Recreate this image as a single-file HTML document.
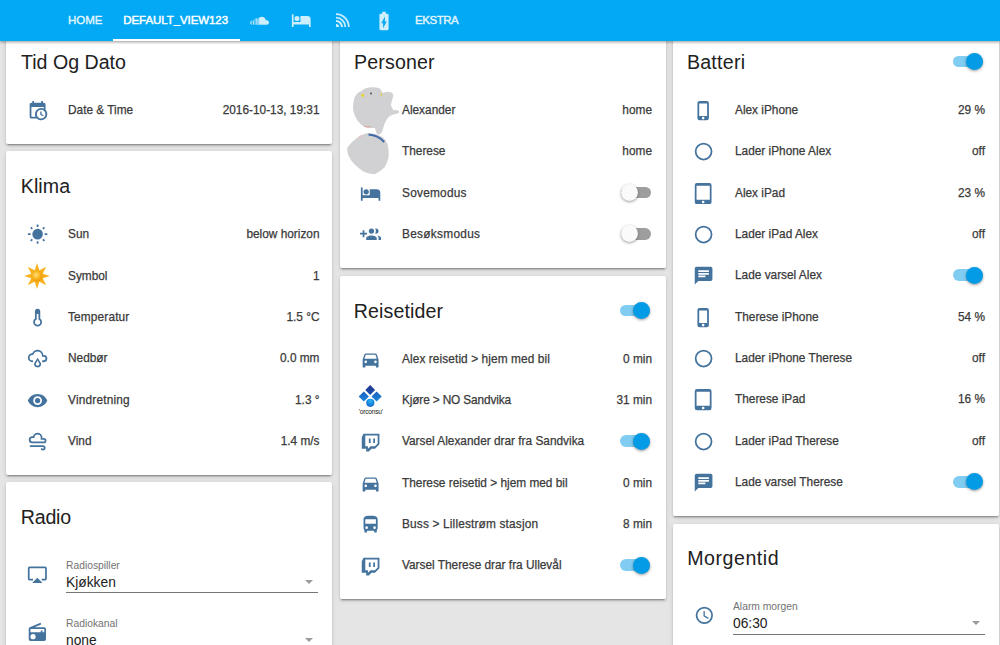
<!DOCTYPE html>
<html><head><meta charset="utf-8"><style>
*{box-sizing:border-box;margin:0;padding:0}
html,body{width:1000px;height:645px;overflow:hidden;background:#e5e5e5;font-family:"Liberation Sans",sans-serif;color:#212121}
#hdr{position:absolute;left:0;top:0;width:1000px;height:41px;background:#03a9f4;z-index:5;box-shadow:0 1px 3px rgba(0,0,0,0.42)}
.tab{position:absolute;top:0;height:41px;line-height:41px;font-size:11.5px;font-weight:normal;-webkit-text-stroke:0.45px currentColor;color:rgba(255,255,255,0.8);white-space:nowrap}
.tab.sel{color:#fff}
.uline{position:absolute;left:113px;top:39px;width:127px;height:2px;background:#fff}
.hicon{position:absolute;fill:rgba(255,255,255,0.8)}
.card{position:absolute;background:#fff;border-radius:2px;box-shadow:0 2px 2px 0 rgba(0,0,0,.14),0 1px 5px 0 rgba(0,0,0,.12),0 3px 1px -2px rgba(0,0,0,.2)}
.c1{left:6px;width:326px}
.c2{left:340px;width:326px}
.c3{left:673px;width:326px}
.title{position:absolute;left:15px;height:40px;line-height:40px;font-size:19.6px;white-space:nowrap;color:#212121}
.row{position:absolute;left:0;width:100%;height:40px;line-height:40px;font-size:11.85px;white-space:nowrap;color:#3a3a3a;-webkit-text-stroke:0.25px #3a3a3a}
.row .nm{position:absolute;left:62px;top:0}
.row .val{position:absolute;right:14px;top:0}
.row svg.ic{position:absolute;left:20.05px;top:10.1px;width:21.2px;height:21.2px;fill:#44739e}
.row svg.img{position:absolute}
.tg{position:absolute;right:15px;top:14px;width:30px;height:12px}
.tg .tr{position:absolute;left:0;top:0;width:30px;height:11.6px;border-radius:6px;background:#9e9e9e}
.tg .kn{position:absolute;top:-2.7px;left:-0.7px;width:17px;height:17px;border-radius:50%;background:#fafafa;box-shadow:0 1px 3px rgba(0,0,0,0.4)}
.tg.on .tr{background:rgba(3,155,229,0.5)}
.tg.on .kn{left:13.7px;background:#039be5}
.inp{position:absolute;left:60px;right:14px}
.inp .lbl{position:absolute;left:0;font-size:10.3px;color:#737373;white-space:nowrap}
.inp .v{position:absolute;left:0;font-size:13.8px;color:#212121;white-space:nowrap}
.inp .ul{position:absolute;left:0;right:0;height:1px;background:#757575}
.inp .arr{position:absolute;right:5px;width:0;height:0;border-left:4.3px solid transparent;border-right:4.3px solid transparent;border-top:4.6px solid #9b9b9b}
.c1 .row .val{right:12.5px}
.tg.on{right:15.7px}
.tg .kn{left:-0.2px}
.tg.on .kn{left:13px}
.c1 .row svg.ic{left:20.7px}
</style></head><body>
<div id="hdr">
  <div class="tab" style="left:68px">HOME</div>
  <div class="tab sel" style="left:123.3px;letter-spacing:-0.08px">DEFAULT_VIEW123</div>
  <div class="uline"></div>
  <svg class="hicon" style="left:249px;top:9.5px;width:20.9px;height:20.9px" viewBox="0 0 24 24"><path d="M11.56,8.87V17H20.32V17C22.17,16.87 23,15.73 23,14.33C23,12.85 21.88,11.66 20.38,11.66C20,11.66 19.68,11.74 19.35,11.88C19.11,9.54 17.12,7.71 14.67,7.71C13.5,7.71 12.39,8.15 11.56,8.87M10.68,9.89C10.38,9.71 10.06,9.57 9.71,9.5V17H11.1V9.34C10.95,9.5 10.81,9.7 10.68,9.89M8.33,9.35V17H9.25V9.38C9.06,9.35 8.87,9.34 8.67,9.34C8.55,9.34 8.44,9.34 8.33,9.35M6.5,10V17H7.41V9.54C7.08,9.65 6.770,9.81 6.5,10M4.83,12.5C4.77,12.5 4.71,12.44 4.64,12.41V17H5.56V10.86C5.19,11.34 4.94,11.91 4.83,12.5M2.79,12.22V16.91C3,16.97 3.24,17 3.5,17H3.72V12.14C3.64,12.13 3.56,12.12 3.5,12.12C3.24,12.12 3,12.16 2.79,12.22M1,14.56C1,15.31 1.34,15.97 1.87,16.42V12.71C1.34,13.15 1,13.82 1,14.56Z"/></svg>
  <svg class="hicon" style="left:290.85px;top:9.83px;width:20.5px;height:20.5px" viewBox="0 0 24 24"><path d="M7,13A3,3 0 0,0 10,10A3,3 0 0,0 7,7A3,3 0 0,0 4,10A3,3 0 0,0 7,13M19,7H11V14H3V5H1V20H3V17H21V20H23V11A4,4 0 0,0 19,7Z"/></svg>
  <svg class="hicon" style="left:335.6px;top:13.1px;width:14px;height:14px" viewBox="0 0 14 14"><path d="M0,14V10.9A3.1,3.1 0 0,1 3.1,14ZM0,7.00A7.00,7.00 0 0,1 7.00,14H4.90A4.90,4.90 0 0,0 0,9.10ZM0,3.85A10.15,10.15 0 0,1 10.15,14H8.40A8.40,8.40 0 0,0 0,5.60ZM0,0.35A13.65,13.65 0 0,1 13.65,14H11.90A11.90,11.90 0 0,0 0,2.10Z"/></svg>
  <svg class="hicon" style="left:373px;top:9.7px;width:22px;height:22px" viewBox="0 0 24 24"><path d="M15.67,4H14V2H10V4H8.33C7.6,4 7,4.6 7,5.33V20.67C7,21.4 7.6,22 8.33,22H15.67C16.4,22 17,21.4 17,20.67V5.33C17,4.6 16.4,4 15.67,4M11,20V14.5H9L13,7V12.5H15L11,20Z"/></svg>
  <div class="tab" style="left:415px;letter-spacing:-0.45px">EKSTRA</div>
</div>
<div class="card c1" style="top:26.70px;height:117.00px"><div class="title" style="top:15.20px;left:15.00px;letter-spacing:0.00px">Tid Og Dato</div><div class="row" style="top:63.30px"><svg class="ic" viewBox="0 0 24 24"><path d="M15,13H16.5V15.82L18.94,17.23L18.19,18.53L15,16.69V13M19,8H5V19H9.67C9.24,18.09 9,17.07 9,16A7,7 0 0,1 16,9C17.07,9 18.09,9.24 19,9.67V8M5,21C3.89,21 3,20.1 3,19V5C3,3.89 3.89,3 5,3H6V1H8V3H16V1H18V3H19A2,2 0 0,1 21,5V11.1C22.24,12.36 23,14.09 23,16A7,7 0 0,1 16,23C14.09,23 12.36,22.24 11.1,21H5M16,11.15A4.85,4.85 0 0,0 11.15,16C11.15,18.68 13.32,20.85 16,20.85A4.85,4.85 0 0,0 20.85,16C20.85,13.32 18.68,11.15 16,11.15Z"/></svg><span class="nm">Date &amp; Time</span><span class="val">2016-10-13, 19:31</span></div></div>
<div class="card c1" style="top:151.00px;height:323.65px"><div class="title" style="top:15.20px;left:14.70px;letter-spacing:0.12px">Klima</div><div class="row" style="top:63.30px"><svg class="ic" viewBox="0 0 24 24"><path d="M3.55,18.54L4.96,19.95L6.76,18.16L5.34,16.74M11,22.45C11.32,22.45 13,22.45 13,22.45V19.5H11M12,5.5A6,6 0 0,0 6,11.5A6,6 0 0,0 12,17.5A6,6 0 0,0 18,11.5C18,8.18 15.31,5.5 12,5.5M20,12.5H23V10.5H20M17.24,18.16L19.04,19.95L20.45,18.54L18.66,16.74M20.45,4.46L19.04,3.05L17.24,4.84L18.66,6.26M13,0.55H11V3.5H13M4,10.5H1V12.5H4M6.76,4.84L4.96,3.05L3.55,4.46L5.34,6.26L6.76,4.84Z"/></svg><span class="nm">Sun</span><span class="val">below horizon</span></div><div class="row" style="top:104.63px"><svg class="img" style="left:18.3px;top:7.1px;width:26px;height:26px" viewBox="0 0 26 26">
<defs><radialGradient id="sg" cx="0.42" cy="0.4" r="0.6"><stop offset="0" stop-color="#ffe07a"/><stop offset="0.6" stop-color="#f9b21d"/><stop offset="1" stop-color="#ef9a0e"/></radialGradient></defs>
<polygon fill="#f6b21f" points="13.00,0.00 15.37,7.27 22.19,3.81 18.73,10.63 26.00,13.00 18.73,15.37 22.19,22.19 15.37,18.73 13.00,26.00 10.63,18.73 3.81,22.19 7.27,15.37 0.00,13.00 7.27,10.63 3.81,3.81 10.63,7.27"/>
<circle cx="13" cy="13" r="5.6" fill="url(#sg)"/></svg><span class="nm">Symbol</span><span class="val">1</span></div><div class="row" style="top:145.96px"><svg class="ic" viewBox="0 0 24 24"><path d="M17,17A5,5 0 0,1 12,22A5,5 0 0,1 7,17C7,15.36 7.79,13.91 9,13V5A3,3 0 0,1 12,2A3,3 0 0,1 15,5V13C16.21,13.91 17,15.36 17,17M11,8V14.17C9.840,14.58 9,15.69 9,17A3,3 0 0,0 12,20A3,3 0 0,0 15,17C15,15.69 14.16,14.58 13,14.17V8H11Z"/></svg><span class="nm" style="letter-spacing:0.15px">Temperatur</span><span class="val">1.5 °C</span></div><div class="row" style="top:187.29px"><svg class="ic" viewBox="0 0 24 24"><path d="M6,14A1,1 0 0,1 7,15A1,1 0 0,1 6,16A5,5 0 0,1 1,11A5,5 0 0,1 6,6C7,3.65 9.3,2 12,2C15.43,2 18.24,4.66 18.5,8.03L19,8A4,4 0 0,1 23,12A4,4 0 0,1 19,16H18A1,1 0 0,1 17,15A1,1 0 0,1 18,14H19A2,2 0 0,0 21,12A2,2 0 0,0 19,10H17V9A5,5 0 0,0 12,4C9.5,4 7.45,5.82 7.06,8.19C6.73,8.07 6.37,8 6,8A3,3 0 0,0 3,11A3,3 0 0,0 6,14M14.83,15.67C16.39,17.23 16.39,19.5 14.83,21.08C14.05,21.86 13,22 12,22C11,22 9.95,21.86 9.17,21.08C7.61,19.5 7.61,17.23 9.17,15.67L12,11L14.83,15.67M13.41,16.69L12,14.25L10.59,16.69C9.8,17.5 9.8,18.7 10.59,19.5C11,19.93 11.5,20 12,20C12.5,20 13,19.93 13.41,19.5C14.2,18.7 14.2,17.5 13.41,16.69Z"/></svg><span class="nm">Nedbør</span><span class="val">0.0 mm</span></div><div class="row" style="top:228.62px"><svg class="ic" viewBox="0 0 24 24"><path d="M12,9A3,3 0 0,0 9,12A3,3 0 0,0 12,15A3,3 0 0,0 15,12A3,3 0 0,0 12,9M12,17A5,5 0 0,1 7,12A5,5 0 0,1 12,7A5,5 0 0,1 17,12A5,5 0 0,1 12,17M12,4.5C7,4.5 2.73,7.61 1,12C2.73,16.39 7,19.5 12,19.5C17,19.5 21.27,16.39 23,12C21.27,7.61 17,4.5 12,4.5Z"/></svg><span class="nm" style="letter-spacing:0.20px">Vindretning</span><span class="val">1.3 °</span></div><div class="row" style="top:269.95px"><svg class="ic" viewBox="0 0 24 24"><path d="M6,6L6.69,6.06C7.32,3.72 9.46,2 12,2A5.5,5.5 0 0,1 17.5,7.5L17.42,8.45C17.88,8.16 18.42,8 19,8A3,3 0 0,1 22,11A3,3 0 0,1 19,14H6A4,4 0 0,1 2,10A4,4 0 0,1 6,6M6,8A2,2 0 0,0 4,10A2,2 0 0,0 6,12H19A1,1 0 0,0 20,11A1,1 0 0,0 19,10H15.5V7.5A3.5,3.5 0 0,0 12,4A3.5,3.5 0 0,0 8.5,7.5V8H6M18,18H4A1,1 0 0,1 3,17A1,1 0 0,1 4,16H18A3,3 0 0,1 21,19A3,3 0 0,1 18,22C17.17,22 16.42,21.66 15.880,21.12C15.5,20.73 15.5,20.1 15.88,19.71C16.27,19.32 16.9,19.32 17.29,19.71C17.47,19.89 17.72,20 18,20A1,1 0 0,0 19,19A1,1 0 0,0 18,18Z"/></svg><span class="nm">Vind</span><span class="val">1.4 m/s</span></div></div>
<div class="card c1" style="top:482.3px;height:250px">
  <div class="title" style="top:14.7px;left:14.8px;letter-spacing:-0.21px">Radio</div>
  <svg class="img" style="position:absolute;left:20.6px;top:81.7px;width:20.7px;height:20.7px;fill:#44739e" viewBox="0 0 24 24"><path d="M6,22H18L12,16M21,3H3A2,2 0 0,0 1,5V17A2,2 0 0,0 3,19H7V17H3V5H21V17H17V19H21A2,2 0 0,0 23,17V5A2,2 0 0,0 21,3Z"/></svg>
  <div class="inp" style="top:70px;height:50px">
    <div class="lbl" style="top:7.3px">Radiospiller</div>
    <div class="v" style="top:22.8px">Kjøkken</div>
    <div class="ul" style="top:40px"></div>
    <div class="arr" style="top:27.5px"></div>
  </div>
  <svg class="img" style="position:absolute;left:20.6px;top:139.8px;width:20.7px;height:20.7px;fill:#44739e" viewBox="0 0 24 24"><path d="M20,6A2,2 0 0,1 22,8V20A2,2 0 0,1 20,22H4A2,2 0 0,1 2,20V8C2,7.15 2.53,6.42 3.28,6.130L15.71,1L16.47,2.83L8.83,6H20M20,8H4V12H16V10H18V12H20V8M7,14A3,3 0 0,0 4,17A3,3 0 0,0 7,20A3,3 0 0,0 10,17A3,3 0 0,0 7,14Z"/></svg>
  <div class="inp" style="top:128.2px;height:50px">
    <div class="lbl" style="top:7.3px">Radiokanal</div>
    <div class="v" style="top:22.8px">none</div>
    <div class="ul" style="top:40px"></div>
    <div class="arr" style="top:27.5px"></div>
  </div>
</div>
<div class="card c2" style="top:26.70px;height:240.99px"><div class="title" style="top:15.20px;left:13.95px;letter-spacing:0.17px">Personer</div><div class="row" style="top:63.30px"><span class="nm">Alexander</span><span class="val">home</span></div><div class="row" style="top:104.63px"><span class="nm">Therese</span><span class="val">home</span></div><div class="row" style="top:145.96px"><svg class="ic" style="top:10.60px" viewBox="0 0 24 24"><path d="M7,13A3,3 0 0,0 10,10A3,3 0 0,0 7,7A3,3 0 0,0 4,10A3,3 0 0,0 7,13M19,7H11V14H3V5H1V20H3V17H21V20H23V11A4,4 0 0,0 19,7Z"/></svg><span class="nm" style="letter-spacing:0.24px">Sovemodus</span><div class="tg"><div class="tr"></div><div class="kn"></div></div></div><div class="row" style="top:187.29px"><svg class="ic" viewBox="0 0 24 24"><path d="M13,13C11,13 7,14 7,16V18H19V16C19,14 15,13 13,13M19.62,13.16C20.45,13.88 21,14.82 21,16V18H24V16C24,14.46 21.63,13.5 19.62,13.16M13,11A3,3 0 0,0 16,8A3,3 0 0,0 13,5A3,3 0 0,0 10,8A3,3 0 0,0 13,11M18,11A3,3 0 0,0 21,8A3,3 0 0,0 18,5C17.68,5 17.37,5.05 17.08,5.14C17.65,5.95 18,6.94 18,8C18,9.06 17.65,10.04 17.08,10.85C17.37,10.95 17.68,11 18,11M8,10H5V7H3V10H0V12H3V15H5V12H8V10Z"/></svg><span class="nm" style="letter-spacing:0.30px">Besøksmodus</span><div class="tg"><div class="tr"></div><div class="kn"></div></div></div><svg style="position:absolute;left:0;top:53.3px;width:62px;height:100px" viewBox="0 0 62 100">
<g fill="#d1d1d3" stroke="#d1d1d3" stroke-width="2.5" stroke-linejoin="round">
<path d="M15.5,18.6 C17,15 19,13 21.7,12.4 C25,9.5 28,8.5 31,8.5 C34,8.3 37,8.6 38.8,9.3 C40.5,11 41.5,13 41.9,14.7 C44,13.5 47,12.8 49.6,13.2 C51,13.5 52,14.5 52,15.5 C51.5,19 50,22 49.6,24.8 C50.5,27.5 51.5,30 52.7,31.8 C54.5,31.2 56.5,31.2 58,31.8 C56,32.6 54,33 52.7,33.3 C51,34 49.5,34.8 48,35.7 C46,38 44.5,40.5 43.4,43.4 C42.5,46 41.8,48.5 41,51.2 C40,52.5 39,53.3 38,53.5 C37,51 36.5,48.5 35.7,46.5 C33,46.8 30.5,46.8 27.9,46.5 C25.5,45.8 23.5,44.8 21.7,43.4 C19.5,41.5 18,39.5 17,37.2 C15.5,34.5 14.8,32 14.3,29.5 C14,26 14.5,22 15.5,18.6Z"/>
<path d="M27.9,54.3 C33,54.5 38,56 41.9,58 C44,60 45.5,62.5 46.5,65 C47.5,69 47.8,73.5 47.3,77.5 C46.5,81 45.2,84 43.4,86.8 C40.5,89.5 37.5,91.5 34.1,93 C30.5,92.5 26.8,91.5 23.3,90 C20.5,88 18,86 15.5,83.7 C13,80.8 10.8,77.8 9.3,74.4 C8.6,72.3 8.3,70.2 8.5,68.2 C10,66 12,64 14,62 C16,60 18,58.5 20.2,57.4 C22.7,55.8 25.2,54.8 27.9,54.3Z"/>
</g>
<path d="M28.5,54.6 C34,55 40,57.5 44.2,62" stroke="#3f6aa8" stroke-width="2" fill="none"/>
<path d="M20.5,15.5 L24,13.5 L23.5,17.5Z" fill="#e6d21a"/>
<path d="M40,14 L42,13 L42,17Z" fill="#e0d040"/>
<circle cx="31" cy="13.5" r="0.9" fill="#444"/>
<path d="M24,46 C26,47 29,47 31,46" stroke="#e0b0a8" stroke-width="1.2" fill="none"/>
<path d="M19,57 L22,55.5" stroke="#e8b8b0" stroke-width="1.2" fill="none"/>
</svg>
</div>
<div class="card c2" style="top:275.50px;height:323.65px"><div class="title" style="top:15.20px;left:13.80px;letter-spacing:0.11px">Reisetider</div><div class="row" style="top:15.20px"><div class="tg on"><div class="tr"></div><div class="kn"></div></div></div><div class="row" style="top:63.30px"><svg class="ic" viewBox="0 0 24 24"><path d="M5,11L6.5,6.5H17.5L19,11M17.5,16A1.5,1.5 0 0,1 16,14.5A1.5,1.5 0 0,1 17.5,13A1.5,1.5 0 0,1 19,14.5A1.5,1.5 0 0,1 17.5,16M6.5,16A1.5,1.5 0 0,1 5,14.5A1.5,1.5 0 0,1 6.5,13A1.5,1.5 0 0,1 8,14.5A1.5,1.5 0 0,1 6.5,16M18.92,6C18.72,5.42 18.16,5 17.5,5H6.5C5.84,5 5.28,5.42 5.08,6L3,12V20A1,1 0 0,0 4,21H5A1,1 0 0,0 6,20V19H18V20A1,1 0 0,0 19,21H20A1,1 0 0,0 21,20V12L18.92,6Z"/></svg><span class="nm" style="letter-spacing:0.10px">Alex reisetid &gt; hjem med bil</span><span class="val">0 min</span></div><div class="row" style="top:104.63px"><svg class="img" style="left:14px;top:1.9px;width:34px;height:36px" viewBox="354 382 34 36">
<defs>
<linearGradient id="lgt" x1="0" y1="0" x2="0" y2="1"><stop offset="0" stop-color="#24358f"/><stop offset="1" stop-color="#1553b0"/></linearGradient>
<linearGradient id="lgs" x1="0" y1="0" x2="0" y2="1"><stop offset="0" stop-color="#1a5fbf"/><stop offset="1" stop-color="#1a86dc"/></linearGradient>
<radialGradient id="lgc" cx="0.5" cy="0.3" r="0.7"><stop offset="0" stop-color="#26b4f5"/><stop offset="1" stop-color="#1565c8"/></radialGradient>
</defs>
<polygon points="370.2,385.1 375.1,390 370.2,394.9 365.3,390" fill="url(#lgt)"/>
<polygon points="363.8,391.4 368.9,396.5 363.8,401.6 358.7,396.5" fill="url(#lgs)"/>
<polygon points="376.6,391.4 381.7,396.5 376.6,401.6 371.5,396.5" fill="url(#lgs)"/>
<circle cx="370.3" cy="402.8" r="4.1" fill="url(#lgc)"/>
<text x="370.8" y="413.6" font-size="6.6" text-anchor="middle" fill="#222" font-family="Liberation Sans" letter-spacing="-0.2">'orconsu'</text>
</svg>
<span class="nm" style="letter-spacing:-0.14px">Kjøre &gt; NO Sandvika</span><span class="val">31 min</span></div><div class="row" style="top:145.96px"><svg class="ic" viewBox="0 0 24 24"><path d="M4,2H22V14L17,19H13L10,22H7V19H2V6L4,2M20,13V4H6V16H9V19L12,16H17L20,13M15,7.5H17V12.6H15V7.5M10,7.5H12V12.6H10V7.5Z"/></svg><span class="nm">Varsel Alexander drar fra Sandvika</span><div class="tg on"><div class="tr"></div><div class="kn"></div></div></div><div class="row" style="top:187.29px"><svg class="ic" viewBox="0 0 24 24"><path d="M5,11L6.5,6.5H17.5L19,11M17.5,16A1.5,1.5 0 0,1 16,14.5A1.5,1.5 0 0,1 17.5,13A1.5,1.5 0 0,1 19,14.5A1.5,1.5 0 0,1 17.5,16M6.5,16A1.5,1.5 0 0,1 5,14.5A1.5,1.5 0 0,1 6.5,13A1.5,1.5 0 0,1 8,14.5A1.5,1.5 0 0,1 6.5,16M18.92,6C18.72,5.42 18.16,5 17.5,5H6.5C5.84,5 5.28,5.42 5.08,6L3,12V20A1,1 0 0,0 4,21H5A1,1 0 0,0 6,20V19H18V20A1,1 0 0,0 19,21H20A1,1 0 0,0 21,20V12L18.92,6Z"/></svg><span class="nm">Therese reisetid &gt; hjem med bil</span><span class="val">0 min</span></div><div class="row" style="top:228.62px"><svg class="ic" viewBox="0 0 24 24"><path d="M18,11H6V6H18M16.5,17A1.5,1.5 0 0,1 15,15.5A1.5,1.5 0 0,1 16.5,14A1.5,1.5 0 0,1 18,15.5A1.5,1.5 0 0,1 16.5,17M7.5,17A1.5,1.5 0 0,1 6,15.5A1.5,1.5 0 0,1 7.5,14A1.5,1.5 0 0,1 9,15.5A1.5,1.5 0 0,1 7.5,17M4,16C4,16.88 4.39,17.67 5,18.22V20A1,1 0 0,0 6,21H7A1,1 0 0,0 8,20V19H16V20A1,1 0 0,0 17,21H18A1,1 0 0,0 19,20V18.22C19.61,17.67 20,16.88 20,16V6C20,2.5 16.42,2 12,2C7.58,2 4,2.5 4,6V16Z"/></svg><span class="nm" style="letter-spacing:0.17px">Buss &gt; Lillestrøm stasjon</span><span class="val">8 min</span></div><div class="row" style="top:269.95px"><svg class="ic" viewBox="0 0 24 24"><path d="M4,2H22V14L17,19H13L10,22H7V19H2V6L4,2M20,13V4H6V16H9V19L12,16H17L20,13M15,7.5H17V12.6H15V7.5M10,7.5H12V12.6H10V7.5Z"/></svg><span class="nm">Varsel Therese drar fra Ullevål</span><div class="tg on"><div class="tr"></div><div class="kn"></div></div></div></div>
<div class="card c3" style="top:26.70px;height:488.97px"><div class="title" style="top:15.20px;left:13.90px;letter-spacing:0.25px">Batteri</div><div class="row" style="top:15.20px"><div class="tg on"><div class="tr"></div><div class="kn"></div></div></div><div class="row" style="top:63.30px"><svg class="ic" viewBox="0 0 24 24"><path d="M16,18H7V4H16M11.5,22A1.5,1.5 0 0,1 10,20.5A1.5,1.5 0 0,1 11.5,19A1.5,1.5 0 0,1 13,20.5A1.5,1.5 0 0,1 11.5,22M15.5,1H7.5A2.5,2.5 0 0,0 5,3.5V20.5A2.5,2.5 0 0,0 7.5,23H15.5A2.5,2.5 0 0,0 18,20.5V3.5A2.5,2.5 0 0,0 15.5,1Z"/></svg><span class="nm">Alex iPhone</span><span class="val">29 %</span></div><div class="row" style="top:104.63px"><svg class="ic" viewBox="0 0 24 24"><path d="M12,20A8,8 0 0,1 4,12A8,8 0 0,1 12,4A8,8 0 0,1 20,12A8,8 0 0,1 12,20M12,2A10,10 0 0,0 2,12A10,10 0 0,0 12,22A10,10 0 0,0 22,12A10,10 0 0,0 12,2Z"/></svg><span class="nm">Lader iPhone Alex</span><span class="val">off</span></div><div class="row" style="top:145.96px"><svg class="ic" viewBox="0 0 24 24"><path d="M19,19H4V3H19M11.5,23A1.5,1.5 0 0,1 10,21.5A1.5,1.5 0 0,1 11.5,20A1.5,1.5 0 0,1 13,21.5A1.5,1.5 0 0,1 11.5,23M18.5,0H4.5A2.5,2.5 0 0,0 2,2.5V21.5A2.5,2.5 0 0,0 4.5,24H18.5A2.5,2.5 0 0,0 21,21.5V2.5A2.5,2.5 0 0,0 18.5,0Z"/></svg><span class="nm">Alex iPad</span><span class="val">23 %</span></div><div class="row" style="top:187.29px"><svg class="ic" viewBox="0 0 24 24"><path d="M12,20A8,8 0 0,1 4,12A8,8 0 0,1 12,4A8,8 0 0,1 20,12A8,8 0 0,1 12,20M12,2A10,10 0 0,0 2,12A10,10 0 0,0 12,22A10,10 0 0,0 22,12A10,10 0 0,0 12,2Z"/></svg><span class="nm">Lader iPad Alex</span><span class="val">off</span></div><div class="row" style="top:228.62px"><svg class="ic" viewBox="0 0 24 24"><path d="M20,2H4A2,2 0 0,0 2,4V22L6,18H20A2,2 0 0,0 22,16V4C22,2.89 21.1,2 20,2M6,9H18V11H6M14,14H6V12H14M18,8H6V6H18"/></svg><span class="nm">Lade varsel Alex</span><div class="tg on"><div class="tr"></div><div class="kn"></div></div></div><div class="row" style="top:269.95px"><svg class="ic" viewBox="0 0 24 24"><path d="M16,18H7V4H16M11.5,22A1.5,1.5 0 0,1 10,20.5A1.5,1.5 0 0,1 11.5,19A1.5,1.5 0 0,1 13,20.5A1.5,1.5 0 0,1 11.5,22M15.5,1H7.5A2.5,2.5 0 0,0 5,3.5V20.5A2.5,2.5 0 0,0 7.5,23H15.5A2.5,2.5 0 0,0 18,20.5V3.5A2.5,2.5 0 0,0 15.5,1Z"/></svg><span class="nm">Therese iPhone</span><span class="val">54 %</span></div><div class="row" style="top:311.28px"><svg class="ic" viewBox="0 0 24 24"><path d="M12,20A8,8 0 0,1 4,12A8,8 0 0,1 12,4A8,8 0 0,1 20,12A8,8 0 0,1 12,20M12,2A10,10 0 0,0 2,12A10,10 0 0,0 12,22A10,10 0 0,0 22,12A10,10 0 0,0 12,2Z"/></svg><span class="nm">Lader iPhone Therese</span><span class="val">off</span></div><div class="row" style="top:352.61px"><svg class="ic" viewBox="0 0 24 24"><path d="M19,19H4V3H19M11.5,23A1.5,1.5 0 0,1 10,21.5A1.5,1.5 0 0,1 11.5,20A1.5,1.5 0 0,1 13,21.5A1.5,1.5 0 0,1 11.5,23M18.5,0H4.5A2.5,2.5 0 0,0 2,2.5V21.5A2.5,2.5 0 0,0 4.5,24H18.5A2.5,2.5 0 0,0 21,21.5V2.5A2.5,2.5 0 0,0 18.5,0Z"/></svg><span class="nm">Therese iPad</span><span class="val">16 %</span></div><div class="row" style="top:393.94px"><svg class="ic" viewBox="0 0 24 24"><path d="M12,20A8,8 0 0,1 4,12A8,8 0 0,1 12,4A8,8 0 0,1 20,12A8,8 0 0,1 12,20M12,2A10,10 0 0,0 2,12A10,10 0 0,0 12,22A10,10 0 0,0 22,12A10,10 0 0,0 12,2Z"/></svg><span class="nm">Lader iPad Therese</span><span class="val">off</span></div><div class="row" style="top:435.27px"><svg class="ic" viewBox="0 0 24 24"><path d="M20,2H4A2,2 0 0,0 2,4V22L6,18H20A2,2 0 0,0 22,16V4C22,2.89 21.1,2 20,2M6,9H18V11H6M14,14H6V12H14M18,8H6V6H18"/></svg><span class="nm">Lade varsel Therese</span><div class="tg on"><div class="tr"></div><div class="kn"></div></div></div></div>
<div class="card c3" style="top:523.6px;height:250px">
  <div class="title" style="top:14.7px;left:14.2px;letter-spacing:0.54px">Morgentid</div>
  <svg class="img" style="position:absolute;left:20.6px;top:81.7px;width:20.7px;height:20.7px;fill:#44739e" viewBox="0 0 24 24"><path d="M12,20A8,8 0 0,0 20,12A8,8 0 0,0 12,4A8,8 0 0,0 4,12A8,8 0 0,0 12,20M12,2A10,10 0 0,1 22,12A10,10 0 0,1 12,22C6.47,22 2,17.5 2,12A10,10 0 0,1 12,2M12.5,7V12.25L17,14.92L16.25,16.15L11,13V7H12.5Z"/></svg>
  <div class="inp" style="top:70px;height:50px">
    <div class="lbl" style="top:7.3px">Alarm morgen</div>
    <div class="v" style="top:22.8px">06:30</div>
    <div class="ul" style="top:40px"></div>
    <div class="arr" style="top:27.5px"></div>
  </div>
</div>
</body></html>
